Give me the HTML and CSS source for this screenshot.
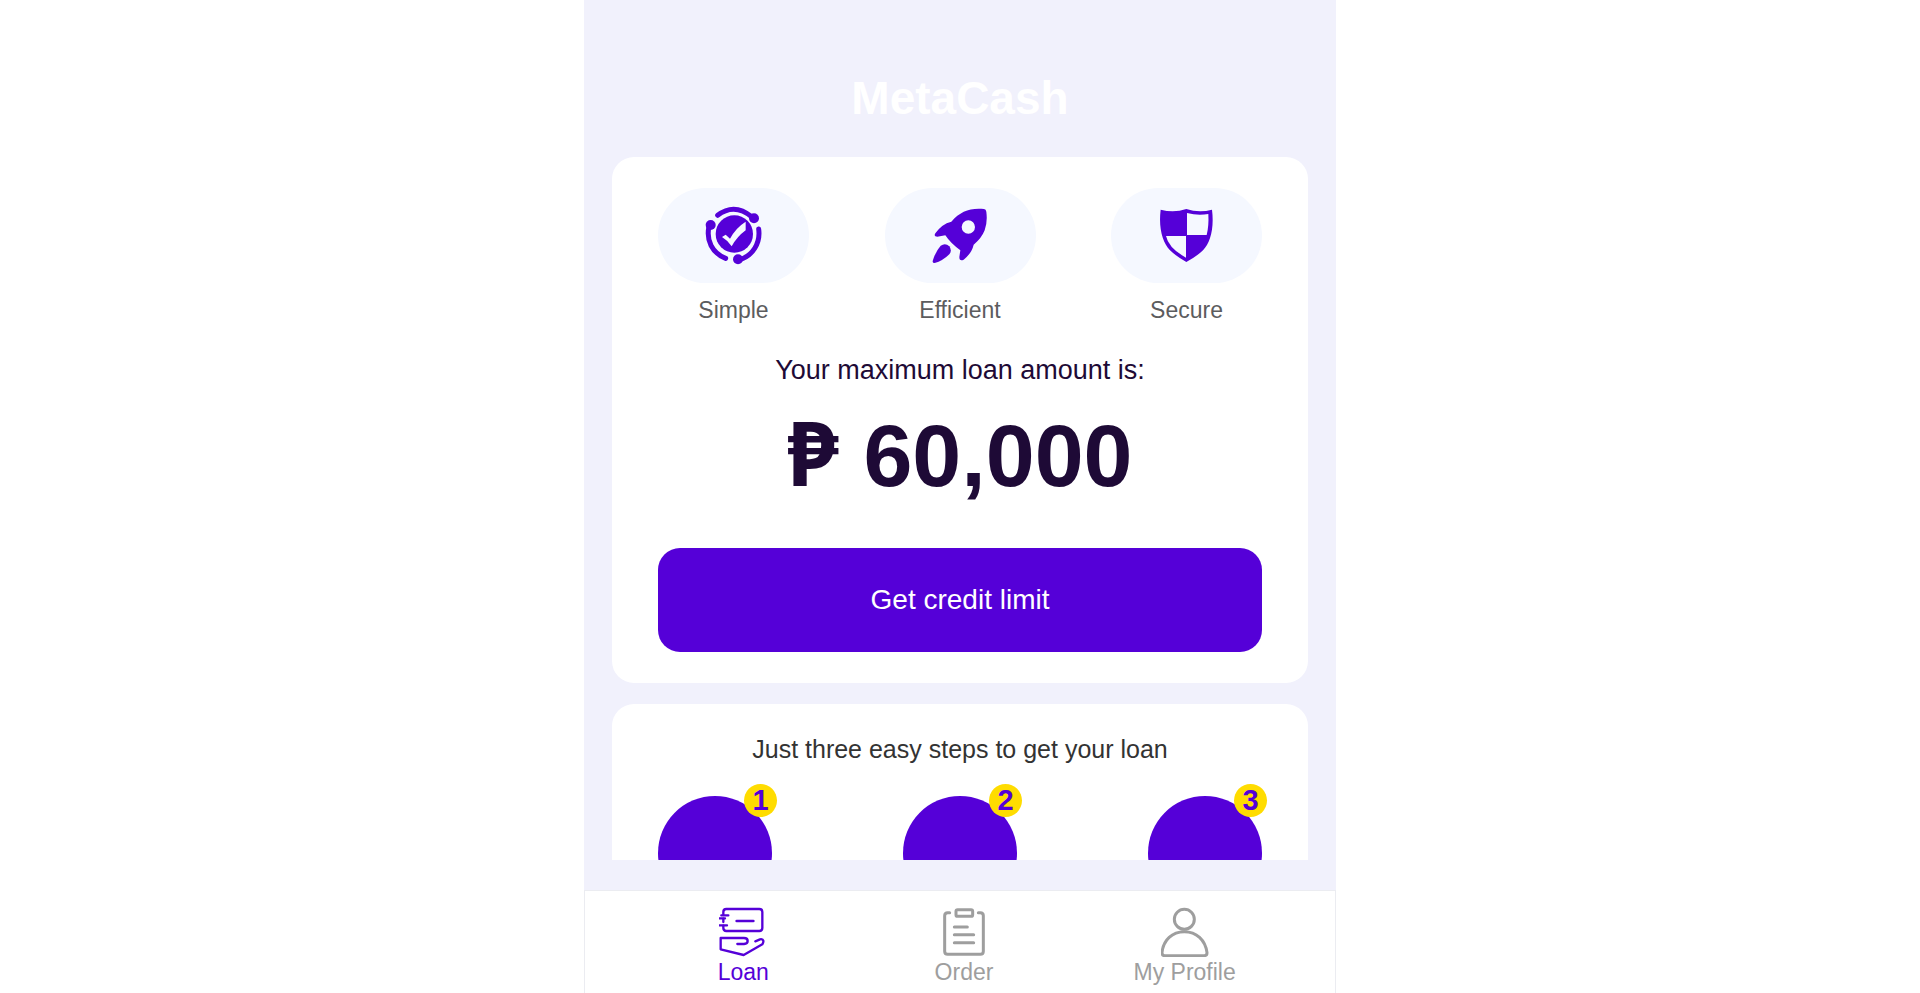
FILE: index.html
```
<!DOCTYPE html>
<html lang="en">
<head>
    <meta charset="UTF-8">
    <meta name="viewport" content="width=device-width, initial-scale=1.0">
    <title>MetaCash</title>
    <link rel="stylesheet" href="styles.css">
</head>
<body>
    <div class="app">
        <main class="content">
            <h1 class="title">MetaCash</h1>

            <section class="card">
                <ul class="features">
                    <li class="feature">
                        <div class="feature-icon">
                            <svg viewBox="42 33 180 180" aria-hidden="true">
                                <circle cx="133" cy="117" r="56"/>
                                <path class="cut" d="M96 126L107 119L120 131Q138 98 167 80L167 106Q141 125 125 154Q113 136 96 126Z"/>
                                <g class="ring">
                                    <path d="M83 61Q133 22 186 66"/>
                                    <path d="M57 94C48 136 66 174 107 190"/>
                                    <path d="M206 102C212 144 188 183 148 194"/>
                                </g>
                                <circle cx="192" cy="70" r="15"/>
                                <circle cx="62" cy="90" r="15"/>
                                <circle cx="144" cy="193" r="15"/>
                            </svg>
                        </div>
                        <span class="feature-label">Simple</span>
                    </li>
                    <li class="feature">
                        <div class="feature-icon">
                            <svg viewBox="30 33 180 180" aria-hidden="true">
                                <path fill-rule="evenodd" d="M192 42Q198 42 199 50Q203 82 194 106Q184 131 161 149Q155 175 131 194Q118 200 118 186L121 166Q92 145 76 121L52 125Q40 125 46 115Q65 87 94 80C121 49 150 38 192 42ZM145 76a20 20 0 1 0 0 40a20 20 0 1 0 0-40Z"/>
                                <path d="M62 152Q76 142 88 154Q97 167 88 178Q68 198 44 204Q37 204 38 198Q46 170 62 152Z"/>
                            </svg>
                        </div>
                        <span class="feature-label">Efficient</span>
                    </li>
                    <li class="feature">
                        <div class="feature-icon">
                            <svg viewBox="51 33 180 180" aria-hidden="true">
                                <path d="M62 44Q102 55 139 42Q177 55 216 44C223 100 211 143 189 166Q173 182 139 201Q106 182 90 166C68 143 55 100 62 44Z"/>
                                <path class="cut" d="M141 54Q174 63 205 57Q207 92 200 120H141Z"/>
                                <path class="cut" d="M138 123H78Q86 160 138 188Z"/>
                            </svg>
                        </div>
                        <span class="feature-label">Secure</span>
                    </li>
                </ul>

                <p class="amount-label">Your maximum loan amount is:</p>
                <p class="amount"><span class="currency">₱</span> 60,000</p>
                <button type="button" class="button">Get credit limit</button>
            </section>

            <section class="card">
                <h2 class="steps-title">Just three easy steps to get your loan</h2>
                <ol class="steps">
                    <li class="step"><span class="badge">1</span></li>
                    <li class="step"><span class="badge">2</span></li>
                    <li class="step"><span class="badge">3</span></li>
                </ol>
            </section>
        </main>

        <nav class="tabs">
            <a href="#loan" class="tab active">
                <svg viewBox="58 51 144 150" stroke-width="7" aria-hidden="true">
                    <path d="M71 75V66Q71 57 80 57H179Q188 57 188 66V114Q188 123 179 123H80Q71 123 71 114V107M71 86V96"/>
                    <path d="M65 76H86M56 85H76M56 106H82"/>
                    <path stroke-width="8" d="M111 93H161"/>
                    <path d="M113 162H133Q144 161 144 153Q144 144 133 144H63V178L132 195L188 163Q192 157 191 152Q188 146 181 148L167 154"/>
                </svg>
                <span>Loan</span>
            </a>
            <a href="#order" class="tab">
                <svg viewBox="60 51 144 150" stroke-width="9" aria-hidden="true">
                    <path d="M89 68H83Q74 68 74 77V184Q74 193 83 193H181Q190 193 190 184V77Q190 68 181 68H175"/>
                    <rect x="108" y="59" width="50" height="20" rx="5"/>
                    <path d="M103 111H142M103 134H161M103 158H161"/>
                </svg>
                <span>Order</span>
            </a>
            <a href="#profile" class="tab">
                <svg viewBox="123 51 144 150" stroke-width="9" aria-hidden="true">
                    <circle cx="193" cy="88" r="30"/>
                    <path d="M126 188C130 150 157 125 193 125C229 125 256 150 261 188Q261 197 252 197H135Q126 197 126 188Z"/>
                </svg>
                <span>My Profile</span>
            </a>
        </nav>
    </div>
</body>
</html>
```
FILE: styles.css
```
:root {
    --primary: #5500d8;
    --page: #f1f1fc;
    --pill: #f5f8ff;
    --badge: #ffdc00;
    --text-dark: #1e0a36;
    --text-muted: #5c5c5e;
    --text-inactive: #9e9e9e;
    --border: #ebecf1;
}

* {
    margin: 0;
    padding: 0;
    box-sizing: border-box;
}

body {
    font-family: "Liberation Sans", Arial, Helvetica, sans-serif;
    background-color: #ffffff;
}

ul,
ol {
    list-style: none;
}

.app {
    display: flex;
    flex-direction: column;
    width: 100%;
    max-width: 752px;
    height: 100vh;
    margin: 0 auto;
    background-color: var(--page);
}

.content {
    flex: 1;
    min-height: 0;
    margin-bottom: 30px;
    padding: 0 28px;
    overflow: hidden;
}

.title {
    padding: 72px 0 32px;
    font-size: 46px;
    line-height: 53px;
    text-align: center;
    color: #ffffff;
}

.card {
    margin-bottom: 21px;
    padding: 31px 46px;
    background-color: #ffffff;
    border-radius: 22px;
    text-align: center;
}

.features {
    display: flex;
    justify-content: space-between;
    margin-bottom: 30px;
}

.feature {
    width: 25%;
}

.feature-icon {
    display: flex;
    align-items: center;
    justify-content: center;
    height: 95px;
    margin-bottom: 14px;
    background-color: var(--pill);
    border-radius: 48px;
}

.feature-icon svg {
    width: 60px;
    height: 60px;
    fill: var(--primary);
}

.feature-icon .cut {
    fill: var(--pill);
}

.feature-icon .ring {
    fill: none;
    stroke: var(--primary);
    stroke-width: 15;
    stroke-linecap: round;
}

.feature-label {
    display: block;
    font-size: 23px;
    line-height: 27px;
    color: var(--text-muted);
}

.amount-label {
    font-size: 27px;
    line-height: 32px;
    color: var(--text-dark);
}

.amount {
    margin: 20px 0 42px;
    font-size: 88px;
    font-weight: 700;
    line-height: 100px;
    color: var(--text-dark);
}

.currency {
    font-family: "Noto Sans", "Open Sans", sans-serif;
    font-size: 90px;
    line-height: 80px;
}

.button {
    width: 100%;
    height: 104px;
    font-family: inherit;
    font-size: 28px;
    color: #ffffff;
    background-color: var(--primary);
    border: none;
    border-radius: 22px;
    cursor: pointer;
}

.steps-title {
    margin-bottom: 32px;
    font-size: 25px;
    font-weight: 400;
    line-height: 29px;
    color: #333333;
}

.steps {
    display: flex;
    justify-content: space-between;
}

.step {
    position: relative;
    width: 114px;
    height: 114px;
    background-color: var(--primary);
    border-radius: 50%;
}

.badge {
    position: absolute;
    top: -12px;
    right: -5px;
    width: 33px;
    height: 33px;
    font-size: 29px;
    font-weight: 700;
    line-height: 33px;
    color: var(--primary);
    background-color: var(--badge);
    border-radius: 50%;
}

.tabs {
    display: grid;
    grid-template-columns: repeat(3, 1fr);
    padding: 16px 40px 7px 48px;
    background-color: #ffffff;
    border: 1px solid var(--border);
    border-bottom: none;
}

.tab {
    display: flex;
    flex-direction: column;
    align-items: center;
    gap: 2px;
    font-size: 23px;
    line-height: 27px;
    color: var(--text-inactive);
    text-decoration: none;
}

.tab svg {
    width: 48px;
    height: 50px;
    fill: none;
    stroke: currentColor;
    stroke-linecap: round;
    stroke-linejoin: round;
}

.tab.active {
    color: var(--primary);
}
```
